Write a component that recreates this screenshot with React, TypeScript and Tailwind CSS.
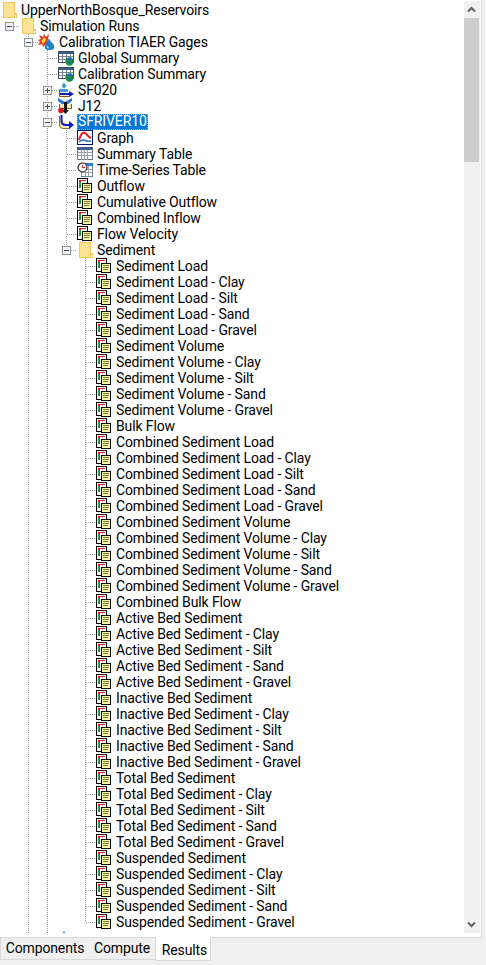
import React from 'react';

type Guide = ' ' | 'I' | 'T' | 'L' | 'T+' | 'T-' | 'L-' | 'B-';
type IconName = 'folder' | 'calib' | 'summary' | 'source' | 'junction' | 'reach' | 'graph' | 'table' | 'series' | 'doc' | 'tip';
type Node = { label: string; icon: IconName; guides: Guide[]; selected?: boolean };

const BOX_OUTLINE = '#919191';
const DOT = '#a0a0a0';

function GuideCell({ kind }: { kind: Guide }) {
  const hasBox = kind.endsWith('+') || kind.endsWith('-');
  const full = kind[0] === 'I' || kind[0] === 'T';
  const top = kind[0] === 'L';
  const horiz = kind[0] === 'T' || kind[0] === 'L' || kind[0] === 'B';
  return (
    <svg width="19" height="16" viewBox="0 0 19 16" shapeRendering="crispEdges" className="shrink-0 block">
      {full && <line x1="9.5" y1="0" x2="9.5" y2="16" stroke={DOT} strokeDasharray="1 1" />}
      {top && <line x1="9.5" y1="0" x2="9.5" y2="8" stroke={DOT} strokeDasharray="1 1" />}
      {horiz && <line x1="10" y1="8.5" x2="19" y2="8.5" stroke={DOT} strokeDasharray="1 1" />}
      {hasBox && (
        <>
          <rect x="5.5" y="4.5" width="8" height="8" fill="#f4f4f4" stroke={BOX_OUTLINE} />
          <rect x="7" y="8" width="5" height="1" fill="#2f4f7f" />
          {kind.endsWith('+') && <rect x="9" y="6" width="1" height="5" fill="#2f4f7f" />}
        </>
      )}
    </svg>
  );
}

function Folder() {
  return (
    <svg width="16" height="16" viewBox="0 0 16 16" shapeRendering="crispEdges" className="block">
      <path d="M0.5 0.5H11.5V11.5H13V15.5H0.5Z" fill="#fde391" stroke="#f3c75c" />
      <rect x="11" y="12" width="2" height="4" fill="#f3c75c" />
      <rect x="12" y="13" width="1" height="2" fill="#ffffff" />
    </svg>
  );
}

function DocIcon() {
  return (
    <svg width="16" height="16" viewBox="0 0 16 16" shapeRendering="crispEdges" className="block">
      <rect x="0.5" y="0.5" width="10" height="13" fill="#fff" stroke="#000" />
      <rect x="2" y="2" width="2" height="8" fill="#1d9a3c" />
      <rect x="2" y="2" width="2" height="2" fill="#e02020" />
      <rect x="4" y="2" width="5" height="1" fill="#e02020" />
      <rect x="5.5" y="5.5" width="9" height="9" fill="#fdf8a8" stroke="#000" />
      <rect x="7" y="7" width="6" height="1" fill="#77773f" />
      <rect x="7" y="9" width="6" height="1" fill="#77773f" />
      <rect x="7" y="11" width="5" height="1" fill="#77773f" />
    </svg>
  );
}

function TreeIcon({ name }: { name: IconName }) {
  if (name === 'folder') return <Folder />;
  if (name === 'doc') return <DocIcon />;
  return (
    <svg width="16" height="16" viewBox="0 0 16 16" className="block">
      {name === 'calib' && (
        <>
          <path d="M0 6 L3 5 L1 1 L5 3 L6 0 L8 3 L11 0 L10 5 L9 9 L5 13 L4 10 L0 11 L2 8 Z" fill="#e8321a" />
          <path d="M3 7 L5 5 L6 3 L8 5 L7 8 L5 10 Z" fill="#ffd93a" />
          <path d="M11 5 C12 8 16 10 16 12.5 A4.5 3.5 0 0 1 7 12.5 C7 10 10 8 11 5 Z" fill="#1f86c9" stroke="#0e5a96" strokeWidth="0.5" />
          <path d="M9 12 A2 2 0 0 0 11 14" stroke="#bfe6ff" strokeWidth="1" fill="none" />
        </>
      )}
      {name === 'summary' && (
        <g shapeRendering="crispEdges">
          <rect x="0.5" y="1.5" width="15" height="11" fill="#fff" stroke="#3b4a5c" />
          <rect x="1" y="2" width="14" height="2" fill="#3b5b8c" />
          <path d="M1 6.5H15M1 9.5H15M4.5 4V12M8.5 4V12M12.5 4V12" stroke="#7c8794" strokeWidth="1" />
          <circle cx="11.5" cy="11.5" r="4.2" fill="#1e8a3e" shapeRendering="auto" />
          <path d="M8.5 9 A4.2 4.2 0 0 1 15 9.5 L13 11 L11 9.5 L9.5 12 Z" fill="#2a6fc9" shapeRendering="auto" />
          <path d="M12 13.5 L15 12.5 L13.5 15 Z" fill="#2a6fc9" shapeRendering="auto" />
        </g>
      )}
      {name === 'source' && (
        <>
          <path d="M6 0 C6.5 2 8 2.5 8 4 A2 2 0 0 1 4 4 C4 2.5 5.5 2 6 0 Z" fill="#2a95c9" />
          <path d="M1.5 7.5 V14.5 H11" stroke="#7a5a20" strokeWidth="1" fill="#fbe9b0" />
          <rect x="2" y="7" width="8" height="3" fill="#3aa0e0" />
          <path d="M2 12 H12" stroke="#0a1ec8" strokeWidth="2" />
          <path d="M11 9 L16 12 L11 15 Z" fill="#0a1ec8" />
        </>
      )}
      {name === 'junction' && (
        <>
          <path d="M0 0 L7 4 L14 0 V3 L9 7 H5 L0 3 Z" fill="#1f78d8" />
          <path d="M1.5 6 V10.5 H13.5 V6" fill="#fbe9b0" stroke="#7a5a20" strokeWidth="1" />
          <rect x="6" y="4" width="3" height="9" fill="#111" />
          <path d="M4 12 L7.5 16 L11 12 Z" fill="#111" />
          <circle cx="3" cy="12.5" r="2.8" fill="#e01010" />
        </>
      )}
      {name === 'reach' && (
        <>
          <path d="M1.5 2 V11 Q1.5 14.5 5 14.5 H12" stroke="#8a6a2a" strokeWidth="1" fill="#fbe9b0" />
          <path d="M3.5 1 V7 Q3.5 11 8 11 H12" stroke="#0a1ec8" strokeWidth="2" fill="none" />
          <path d="M11 7 L16 11 L11 15 Z" fill="#0a1ec8" />
        </>
      )}
      {name === 'graph' && (
        <>
          <rect x="0.5" y="0.5" width="15" height="14" fill="#fff" stroke="#00106e" shapeRendering="crispEdges" />
          <path d="M2 10 C4 3 6 2 8 3 C10 4 11 7 14 8" stroke="#e02020" strokeWidth="2" fill="none" />
          <path d="M2 12 C5 9 8 10 10 11 C11 11.5 13 11 14 11" stroke="#2a6fd9" strokeWidth="1.5" fill="none" />
        </>
      )}
      {name === 'table' && (
        <g shapeRendering="crispEdges">
          <rect x="0.5" y="1.5" width="15" height="12" fill="#fff" stroke="#6d7885" />
          <rect x="0" y="1" width="16" height="3" fill="#3f5f8f" />
          <path d="M1 6.5H15M1 9.5H15M4.5 4V14M7.5 4V14M10.5 4V14" stroke="#9aa3ad" strokeWidth="1" />
        </g>
      )}
      {name === 'series' && (
        <>
          <g shapeRendering="crispEdges">
            <rect x="4.5" y="2.5" width="11" height="12" fill="#fff" stroke="#7c8794" />
            <rect x="4" y="1" width="12" height="3" fill="#2f7fd9" />
            <path d="M5 7.5H15M5 10.5H15M8.5 4V14M11.5 4V14" stroke="#9aa3ad" strokeWidth="1" />
          </g>
          <circle cx="5.5" cy="5.5" r="4.5" fill="#fff" stroke="#222" strokeWidth="1.2" />
          <path d="M5.5 3 V5.5 H8" stroke="#c02020" strokeWidth="1" fill="none" />
        </>
      )}
      {name === 'tip' && (
        <path d="M6 1 C6.5 2 8 3 8 4 A2 2 0 0 1 4 4 C4 3 5.5 2 6 1 Z" fill="#2a95c9" />
      )}
    </svg>
  );
}

const sedimentLabels = [
  'Sediment Load', 'Sediment Load - Clay', 'Sediment Load - Silt', 'Sediment Load - Sand', 'Sediment Load - Gravel',
  'Sediment Volume', 'Sediment Volume - Clay', 'Sediment Volume - Silt', 'Sediment Volume - Sand', 'Sediment Volume - Gravel',
  'Bulk Flow',
  'Combined Sediment Load', 'Combined Sediment Load - Clay', 'Combined Sediment Load - Silt', 'Combined Sediment Load - Sand', 'Combined Sediment Load - Gravel',
  'Combined Sediment Volume', 'Combined Sediment Volume - Clay', 'Combined Sediment Volume - Silt', 'Combined Sediment Volume - Sand', 'Combined Sediment Volume - Gravel',
  'Combined Bulk Flow',
  'Active Bed Sediment', 'Active Bed Sediment - Clay', 'Active Bed Sediment - Silt', 'Active Bed Sediment - Sand', 'Active Bed Sediment - Gravel',
  'Inactive Bed Sediment', 'Inactive Bed Sediment - Clay', 'Inactive Bed Sediment - Silt', 'Inactive Bed Sediment - Sand', 'Inactive Bed Sediment - Gravel',
  'Total Bed Sediment', 'Total Bed Sediment - Clay', 'Total Bed Sediment - Silt', 'Total Bed Sediment - Sand', 'Total Bed Sediment - Gravel',
  'Suspended Sediment', 'Suspended Sediment - Clay', 'Suspended Sediment - Silt', 'Suspended Sediment - Sand', 'Suspended Sediment - Gravel',
];

const nodes: Node[] = [
  { label: 'UpperNorthBosque_Reservoirs', icon: 'folder', guides: [] },
  { label: 'Simulation Runs', icon: 'folder', guides: ['B-'] },
  { label: 'Calibration TIAER Gages', icon: 'calib', guides: [' ', 'T-'] },
  { label: 'Global Summary', icon: 'summary', guides: [' ', 'I', 'T'] },
  { label: 'Calibration Summary', icon: 'summary', guides: [' ', 'I', 'T'] },
  { label: 'SF020', icon: 'source', guides: [' ', 'I', 'T+'] },
  { label: 'J12', icon: 'junction', guides: [' ', 'I', 'T+'] },
  { label: 'SFRIVER10', icon: 'reach', guides: [' ', 'I', 'T-'], selected: true },
  { label: 'Graph', icon: 'graph', guides: [' ', 'I', 'I', 'T'] },
  { label: 'Summary Table', icon: 'table', guides: [' ', 'I', 'I', 'T'] },
  { label: 'Time-Series Table', icon: 'series', guides: [' ', 'I', 'I', 'T'] },
  { label: 'Outflow', icon: 'doc', guides: [' ', 'I', 'I', 'T'] },
  { label: 'Cumulative Outflow', icon: 'doc', guides: [' ', 'I', 'I', 'T'] },
  { label: 'Combined Inflow', icon: 'doc', guides: [' ', 'I', 'I', 'T'] },
  { label: 'Flow Velocity', icon: 'doc', guides: [' ', 'I', 'I', 'T'] },
  { label: 'Sediment', icon: 'folder', guides: [' ', 'I', 'I', 'L-'] },
  ...sedimentLabels.map((label, i): Node => ({
    label,
    icon: 'doc',
    guides: [' ', 'I', 'I', ' ', i === sedimentLabels.length - 1 ? 'L' : 'T'],
  })),
  { label: '', icon: 'tip', guides: [' ', 'I', 'T'] },
];

function TreeRow({ node }: { node: Node }) {
  const offset = node.icon === 'folder' ? 'pl-[3px]' : node.guides.length === 2 ? 'pl-0' : 'pl-[1px]';
  return (
    <div className="flex h-4 items-center whitespace-nowrap">
      {node.guides.map((g, i) => <GuideCell key={i} kind={g} />)}
      <div className={`w-[19px] shrink-0 ${offset}`}>
        <TreeIcon name={node.icon} />
      </div>
      <span className={node.selected
        ? 'ml-[1px] h-4 px-[1px] leading-[15px] text-white bg-[#0078d7] outline-1 outline-dotted outline-[#f0a040] -outline-offset-1'
        : 'ml-[2px] leading-4 text-black'}>
        {node.label}
      </span>
    </div>
  );
}

function Chevron({ up }: { up: boolean }) {
  return (
    <svg width="9" height="7" viewBox="0 0 9 7" className="block">
      <path d={up ? 'M1 5.5 L4.5 2 L8 5.5' : 'M1 1.5 L4.5 5 L8 1.5'} fill="none" stroke="#606060" strokeWidth="2" />
    </svg>
  );
}

export default function App() {
  return (
    <div className="flex h-[965px] w-[486px] flex-col overflow-hidden bg-[#f0f0f0] font-['Roboto',sans-serif] text-[14px] tracking-[-0.12px] text-black">
      {/* tab page: white strip round the tree, thin grey edge on the right and below */}
      <div className="mr-[4px] h-[938px] shrink-0 border-r border-b border-[#d9d9d9] bg-white pt-[1px] pr-[1px]">
        <div className="flex h-[932px]">
          <div className="min-w-0 flex-1 overflow-hidden pt-[1px]">
            {nodes.map((n, i) => <TreeRow key={i} node={n} />)}
          </div>
          <div className="flex w-[16px] shrink-0 flex-col bg-[#f0f0f0]">
            <div className="flex h-[17px] items-center justify-center pr-[1px]"><Chevron up /></div>
            <div className="mr-[1px] h-[144px] bg-[#cdcdcd]" />
            <div className="flex-1" />
            <div className="flex h-[17px] items-center justify-center pr-[1px]"><Chevron up={false} /></div>
          </div>
        </div>
      </div>
      <div className="flex h-[27px] items-start">
        <div className="flex h-[22px] w-[90px] items-center justify-center border-x border-b border-[#d9d9d9] bg-[#f0f0f0]">Components</div>
        <div className="-ml-[1px] flex h-[22px] w-[67px] items-center justify-center border-r border-b border-[#d9d9d9] bg-[#f0f0f0]">Compute</div>
        <div className="-mt-[1px] -ml-[1px] flex h-[24px] w-[56px] items-center justify-center border-x border-b border-[#d9d9d9] bg-white pt-[3px] pl-[3px]">Results</div>
      </div>
    </div>
  );
}
